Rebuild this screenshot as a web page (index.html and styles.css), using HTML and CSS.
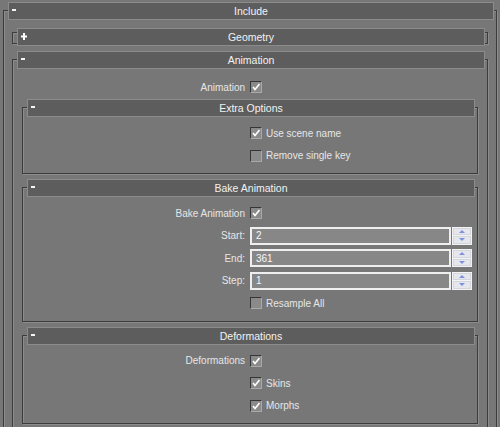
FILE: index.html
```html
<!DOCTYPE html>
<html>
<head>
<meta charset="utf-8">
<link rel="stylesheet" href="styles.css">
</head>
<body>
<div class="frame f-include">
  <div class="rh"><span class="tog"><span class="minus"></span></span><span class="title">Include</span><span></span></div>
  <div class="rc rc-include">
    <div class="frame collapsed">
      <div class="rh"><span class="tog"><svg class="plus" width="6" height="7" viewBox="0 0 6 7"><rect x="2" y="0" width="2" height="7" fill="#fff"/><rect x="0" y="2.5" width="6" height="2" fill="#fff"/></svg></span><span class="title">Geometry</span><span></span></div>
    </div>
    <div class="frame f-anim">
      <div class="rh"><span class="tog"><span class="minus"></span></span><span class="title">Animation</span><span></span></div>
      <div class="rc rc-anim">
        <div class="row"><span class="lbl">Animation</span><span class="ctl"><span class="cb"><svg width="10" height="10" viewBox="0 0 10 10"><path d="M2 5 L4 7.5 L8.5 2" fill="none" stroke="#fff" stroke-width="1.6"/></svg></span></span></div>

        <div class="frame f-extra">
          <div class="rh"><span class="tog"><span class="minus"></span></span><span class="title">Extra Options</span><span></span></div>
          <div class="rc rc-inner">
            <div class="row"><span class="lbl"></span><span class="ctl"><span class="cb"><svg width="10" height="10" viewBox="0 0 10 10"><path d="M2 5 L4 7.5 L8.5 2" fill="none" stroke="#fff" stroke-width="1.6"/></svg></span><span class="txt">Use scene name</span></span></div>
            <div class="row"><span class="lbl"></span><span class="ctl"><span class="cb"></span><span class="txt">Remove single key</span></span></div>
          </div>
        </div>

        <div class="frame f-sib">
          <div class="rh"><span class="tog"><span class="minus"></span></span><span class="title">Bake Animation</span><span></span></div>
          <div class="rc rc-inner">
            <div class="row"><span class="lbl">Bake Animation</span><span class="ctl"><span class="cb"><svg width="10" height="10" viewBox="0 0 10 10"><path d="M2 5 L4 7.5 L8.5 2" fill="none" stroke="#fff" stroke-width="1.6"/></svg></span></span></div>
            <div class="row"><span class="lbl">Start:</span><span class="ctl"><span class="field"><span class="inp">2</span><span class="spn"><span class="up"><i></i></span><span class="dn"><i></i></span></span></span></span></div>
            <div class="row"><span class="lbl">End:</span><span class="ctl"><span class="field"><span class="inp">361</span><span class="spn"><span class="up"><i></i></span><span class="dn"><i></i></span></span></span></span></div>
            <div class="row"><span class="lbl">Step:</span><span class="ctl"><span class="field"><span class="inp">1</span><span class="spn"><span class="up"><i></i></span><span class="dn"><i></i></span></span></span></span></div>
            <div class="row"><span class="lbl"></span><span class="ctl"><span class="cb"></span><span class="txt">Resample All</span></span></div>
          </div>
        </div>

        <div class="frame f-sib">
          <div class="rh"><span class="tog"><span class="minus"></span></span><span class="title">Deformations</span><span></span></div>
          <div class="rc rc-inner">
            <div class="row"><span class="lbl">Deformations</span><span class="ctl"><span class="cb"><svg width="10" height="10" viewBox="0 0 10 10"><path d="M2 5 L4 7.5 L8.5 2" fill="none" stroke="#fff" stroke-width="1.6"/></svg></span></span></div>
            <div class="row"><span class="lbl"></span><span class="ctl"><span class="cb"><svg width="10" height="10" viewBox="0 0 10 10"><path d="M2 5 L4 7.5 L8.5 2" fill="none" stroke="#fff" stroke-width="1.6"/></svg></span><span class="txt">Skins</span></span></div>
            <div class="row"><span class="lbl"></span><span class="ctl"><span class="cb"><svg width="10" height="10" viewBox="0 0 10 10"><path d="M2 5 L4 7.5 L8.5 2" fill="none" stroke="#fff" stroke-width="1.6"/></svg></span><span class="txt">Morphs</span></span></div>
          </div>
        </div>
      </div>
    </div>
  </div>
</div>
</body>
</html>
```

FILE: styles.css
```css
html, body {
  margin: 0;
  padding: 0;
  overflow: hidden;
  background: #777777;
  font-family: "Liberation Sans", Arial, sans-serif;
  font-size: 10px;
  color: #e6e6e6;
}

.frame {
  border: 1px solid #3c3c3c;
  box-shadow: 1px 1px 0 #8c8c8c, inset 1px 1px 0 #8c8c8c;
}

.f-include {
  margin: 10px 3px 0 3px;
}

.rh {
  height: 18px;
  box-sizing: border-box;
  margin: -9px 2px 0 4px;
  border: 1px solid #8b8b8b;
  background: #5d5d5d;
  display: grid;
  grid-template-columns: 20px 1fr 20px;
  align-items: center;
  color: #f2f2f2;
  font-size: 10.5px;
}

.title {
  text-align: center;
}

.tog {
  display: flex;
  align-items: center;
  padding-left: 3px;
  height: 100%;
}

.minus {
  display: block;
  width: 4px;
  height: 2px;
  background: #f4f4f4;
  margin-top: -2px;
}

.plus {
  display: block;
  margin-left: 0;
  margin-top: -1px;
}

.rc-include {
  padding: 12px 8px 10px 8px;
}

.collapsed .rh {
  margin-top: -5px;
  margin-bottom: -3px;
}

.f-anim {
  margin-top: 15px;
}

.rc-anim {
  padding: 9px 9px 12px 9px;
}

.f-extra {
  margin-top: 11px;
}

.f-sib {
  margin-top: 13px;
}

.rc-inner {
  padding: 7px 0 8.5px 0;
  display: flex;
  flex-direction: column;
  gap: 4.5px;
}

.row {
  display: grid;
  grid-template-columns: 1fr 1fr;
  height: 18px;
  align-items: center;
}

.lbl {
  text-align: right;
  padding-right: 5px;
}

.ctl {
  display: flex;
  align-items: center;
  gap: 4px;
}

.cb {
  width: 12px;
  height: 12px;
  box-sizing: border-box;
  border: 1px solid;
  border-color: #363636 #a9a9a9 #a9a9a9 #363636;
  background: #8a8a8a;
  display: flex;
  align-items: center;
  justify-content: center;
}

.cb svg {
  display: block;
}

.field {
  display: flex;
  gap: 1px;
}

.inp {
  width: 201px;
  height: 18px;
  box-sizing: border-box;
  border: 2px solid #efefef;
  background: #878787;
  color: #f8f8f8;
  padding-left: 4px;
  display: flex;
  align-items: center;
}

.spn {
  width: 20px;
  height: 18px;
  box-sizing: border-box;
  background: #f3f3f3;
  padding: 1px;
  display: flex;
  flex-direction: column;
  gap: 1px;
}

.spn span {
  flex: 1;
  background: #e6e7ec;
  border: 1px solid #d4d6dd;
  display: flex;
  align-items: center;
  justify-content: center;
}

.spn i {
  display: block;
  width: 0;
  height: 0;
  border-left: 3px solid transparent;
  border-right: 3px solid transparent;
}

.spn .up i {
  border-bottom: 3px solid #7d92dc;
}

.spn .dn i {
  border-top: 3px solid #7d92dc;
}
```
